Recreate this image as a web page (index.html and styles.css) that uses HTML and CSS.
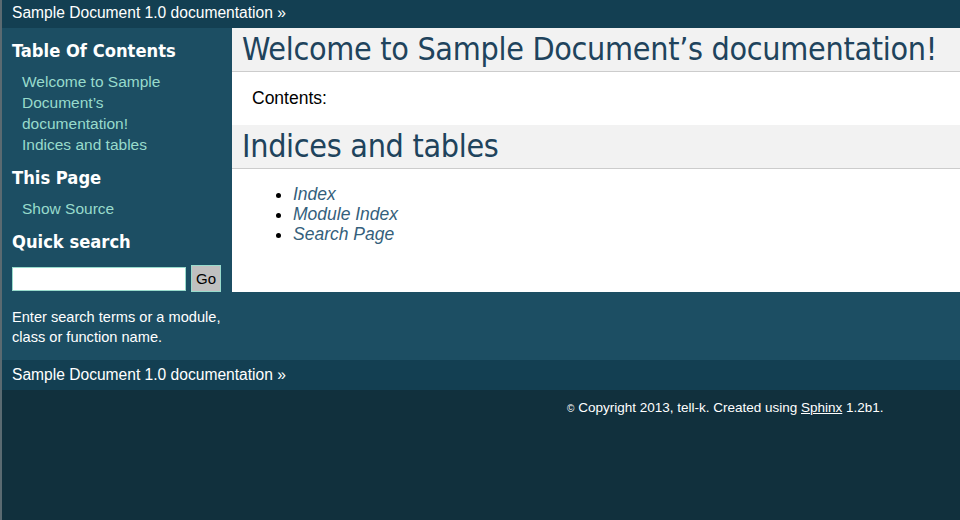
FILE: index.html
```html
<!DOCTYPE html>
<html>
<head>
<meta charset="utf-8">
<title>Welcome to Sample Document’s documentation!</title>
<link rel="stylesheet" href="styles.css">
</head>
<body>
<div class="related"><a href="#">Sample Document 1.0 documentation</a> &raquo;</div>
<div class="document">
  <div class="sidebar">
    <h3>Table Of Contents</h3>
    <ul class="toc">
      <li><a href="#">Welcome to Sample Document’s documentation!</a></li>
      <li><a href="#">Indices and tables</a></li>
    </ul>
    <h3>This Page</h3>
    <ul class="toc">
      <li><a href="#">Show Source</a></li>
    </ul>
    <h3>Quick search</h3>
    <form class="search">
      <input type="text" class="search-input">
      <button type="button" class="search-go">Go</button>
    </form>
    <p class="search-hint">Enter search terms or a module, class or function name.</p>
  </div>
  <div class="body">
    <h1>Welcome to Sample Document’s documentation!</h1>
    <p class="contents">Contents:</p>
    <h2>Indices and tables</h2>
    <ul class="indices">
      <li><a href="#">Index</a></li>
      <li><a href="#">Module Index</a></li>
      <li><a href="#">Search Page</a></li>
    </ul>
  </div>
</div>
<div class="related related-bottom"><a href="#">Sample Document 1.0 documentation</a> &raquo;</div>
<div class="footer"><span class="copy">&copy;</span> Copyright 2013, tell-k. Created using <a href="#">Sphinx</a> 1.2b1.</div>
</body>
</html>
```
FILE: styles.css
```css
html, body {
  margin: 0;
  padding: 0;
}
body {
  background: #11303d;
  border-left: 2px solid #5b6a71;
  min-height: 520px;
  box-sizing: border-box;
  font-family: "Liberation Sans", Arial, sans-serif;
  color: #000;
}
.related {
  background: #133f52;
  color: #fff;
  height: 28px;
  line-height: 26px;
  padding-left: 10px;
  font-size: 15.6px;
}
.related a {
  color: #fff;
  text-decoration: none;
}
.related-bottom {
  height: 30px;
  line-height: 29px;
}
.document {
  display: flex;
  align-items: flex-start;
  background: #1c4e63;
}
.sidebar {
  width: 210px;
  flex: none;
  padding: 12px 10px 13px 10px;
  color: #fff;
}
.sidebar h3 {
  font-family: "DejaVu Sans Condensed", "DejaVu Sans", sans-serif;
  font-weight: bold;
  font-size: 18.2px;
  color: #fff;
  margin: 0;
  line-height: 22px;
}
.toc {
  list-style: none;
  margin: 9px 0 12px 0;
  padding: 0 0 0 10px;
  width: 185px;
  font-size: 15.5px;
  line-height: 21px;
}
.toc a {
  color: #98dbcc;
  text-decoration: none;
}
.search {
  display: flex;
  align-items: center;
  gap: 5px;
  margin: 12px 0 0 0;
}
.search-input {
  width: 172px;
  height: 22px;
  box-sizing: content-box;
  border: 1px solid #98dbcc;
  padding: 0;
  margin: 0;
  background: #fff;
}
.search-go {
  width: 30px;
  height: 27px;
  border: 1px solid #98dbcc;
  background: #c0c0c0;
  color: #000;
  padding: 0;
  margin: 0;
  font-family: "Liberation Sans", Arial, sans-serif;
  font-size: 15px;
}
.search-hint {
  font-size: 14.6px;
  line-height: 20px;
  margin: 15px 0 0 0;
  color: #fff;
}
.body {
  flex: 1;
  background: #fff;
  padding: 0 20px 30px 20px;
  min-width: 0;
  overflow: hidden;
}
.body h1, .body h2 {
  font-family: "DejaVu Sans Condensed", "DejaVu Sans", sans-serif;
  font-weight: normal;
  color: #20435c;
  background: #f2f2f2;
  border-bottom: 1px solid #ccc;
  margin: 0 -20px 0 -20px;
  padding: 0 0 0 10px;
  white-space: nowrap;
  letter-spacing: -0.3px;
}
.body h1 {
  font-size: 32px;
  height: 43px;
  line-height: 42px;
}
.body h2 {
  font-size: 32px;
  height: 43px;
  line-height: 43px;
}
.contents {
  font-size: 17.5px;
  margin: 0;
  padding: 16px 0 16px 0;
  line-height: 21px;
}
.indices {
  margin: 15px 0 18px 0;
  padding-left: 41px;
  font-size: 17.5px;
  line-height: 20px;
}
.indices a {
  color: #355f7c;
  font-style: italic;
  text-decoration: none;
}
.footer {
  color: #fff;
  font-size: 13.5px;
  padding: 10px 0 0 565px;
  line-height: 16px;
}
.copy {
  font-size: 10px;
}
.footer a {
  color: #fff;
  text-decoration: underline;
}
```
